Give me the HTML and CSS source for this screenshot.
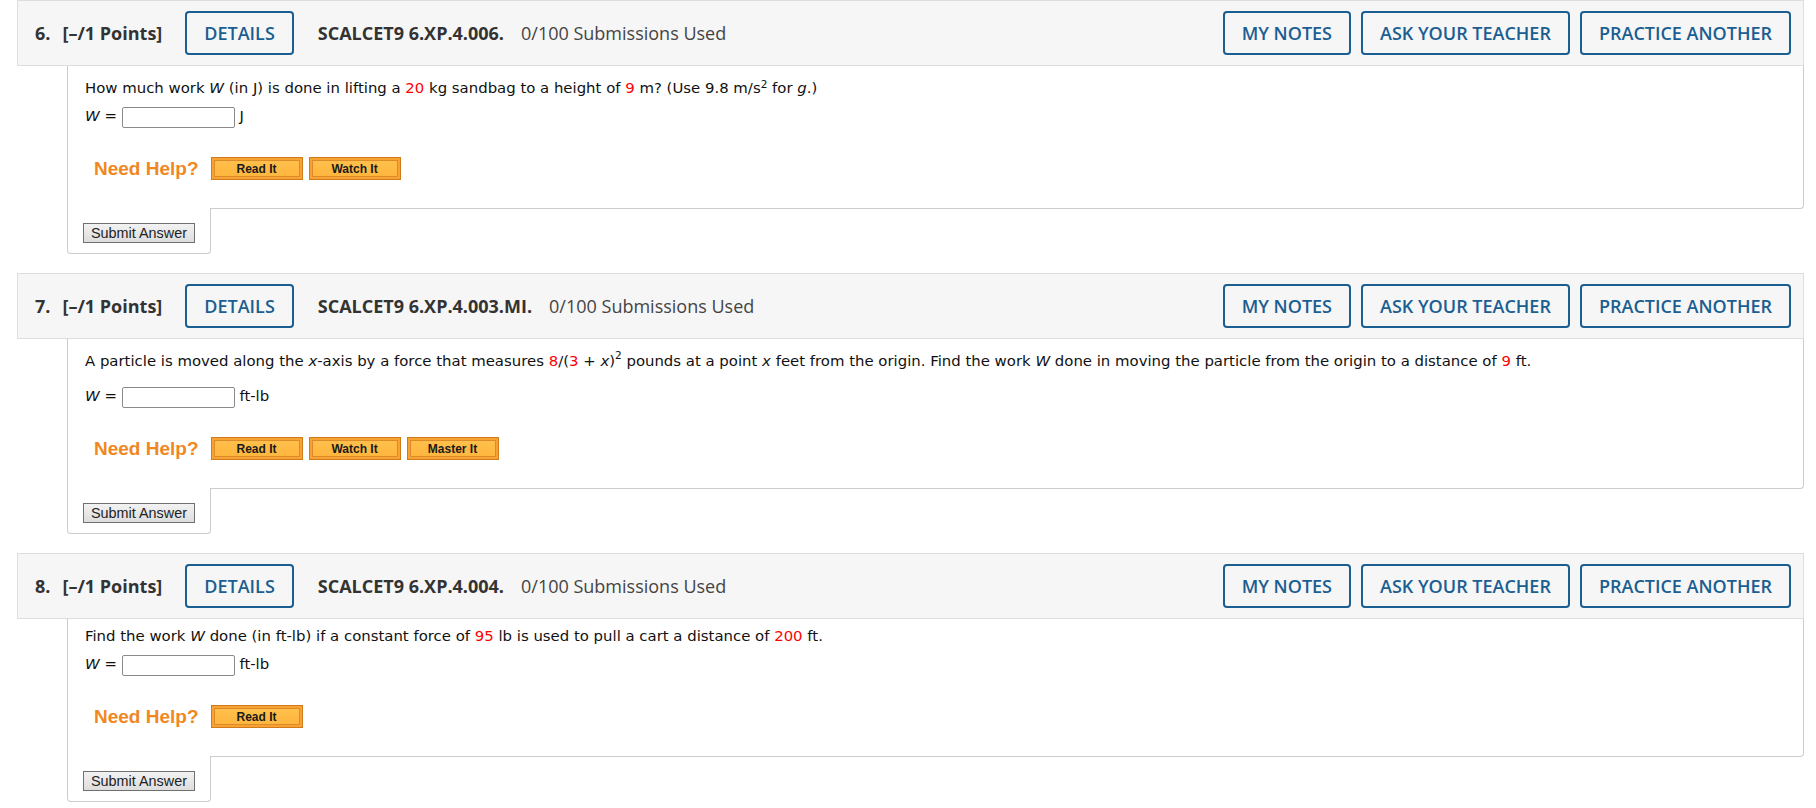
FILE: index.html
```html
<!DOCTYPE html>
<html lang="en">
<head>
<meta charset="utf-8">
<title>Questions</title>
<link rel="stylesheet" href="styles.css">
</head>
<body>
<div class="page">

  <section class="question">
    <header class="q-head">
      <span class="q-num">6.</span>
      <span class="q-points">[–/1 Points]</span>
      <button class="btn-outline q-details">DETAILS</button>
      <span class="q-code">SCALCET9 6.XP.4.006.</span>
      <span class="q-subs">0/100 Submissions Used</span>
      <div class="q-actions">
        <button class="btn-outline btn-notes">MY NOTES</button>
        <button class="btn-outline">ASK YOUR TEACHER</button>
        <button class="btn-outline">PRACTICE ANOTHER</button>
      </div>
    </header>
    <div class="q-body">
      <p class="stem stem--sup">How much work <i>W</i> (in J) is done in lifting a <span class="num">20</span> kg sandbag to a height of <span class="num">9</span> m? (Use 9.8 m/s<sup class="sup">2</sup> for <i>g</i>.)</p>
      <div class="answer"><i>W</i> = <input class="answer-input" type="text"> J</div>
      <div class="help">
        <span class="help-label">Need Help?</span>
        <button class="help-btn">Read It</button>
        <button class="help-btn">Watch It</button>
      </div>
    </div>
    <div class="submit-tab"><button class="submit">Submit Answer</button></div>
  </section>

  <section class="question">
    <header class="q-head">
      <span class="q-num">7.</span>
      <span class="q-points">[–/1 Points]</span>
      <button class="btn-outline q-details">DETAILS</button>
      <span class="q-code">SCALCET9 6.XP.4.003.MI.</span>
      <span class="q-subs">0/100 Submissions Used</span>
      <div class="q-actions">
        <button class="btn-outline btn-notes">MY NOTES</button>
        <button class="btn-outline">ASK YOUR TEACHER</button>
        <button class="btn-outline">PRACTICE ANOTHER</button>
      </div>
    </header>
    <div class="q-body">
      <p class="stem stem--tall">A particle is moved along the <i>x</i>-axis by a force that measures <span class="num">8</span>/(<span class="num">3</span> + <i>x</i>)<sup class="sup sup--high">2</sup> pounds at a point <i>x</i> feet from the origin. Find the work <i>W</i> done in moving the particle from the origin to a distance of <span class="num">9</span> ft.</p>
      <div class="answer"><i>W</i> = <input class="answer-input" type="text"> ft-lb</div>
      <div class="help">
        <span class="help-label">Need Help?</span>
        <button class="help-btn">Read It</button>
        <button class="help-btn">Watch It</button>
        <button class="help-btn">Master It</button>
      </div>
    </div>
    <div class="submit-tab"><button class="submit">Submit Answer</button></div>
  </section>

  <section class="question">
    <header class="q-head">
      <span class="q-num">8.</span>
      <span class="q-points">[–/1 Points]</span>
      <button class="btn-outline q-details">DETAILS</button>
      <span class="q-code">SCALCET9 6.XP.4.004.</span>
      <span class="q-subs">0/100 Submissions Used</span>
      <div class="q-actions">
        <button class="btn-outline btn-notes">MY NOTES</button>
        <button class="btn-outline">ASK YOUR TEACHER</button>
        <button class="btn-outline">PRACTICE ANOTHER</button>
      </div>
    </header>
    <div class="q-body">
      <p class="stem">Find the work <i>W</i> done (in ft-lb) if a constant force of <span class="num">95</span> lb is used to pull a cart a distance of <span class="num">200</span> ft.</p>
      <div class="answer"><i>W</i> = <input class="answer-input" type="text"> ft-lb</div>
      <div class="help">
        <span class="help-label">Need Help?</span>
        <button class="help-btn">Read It</button>
      </div>
    </div>
    <div class="submit-tab"><button class="submit">Submit Answer</button></div>
  </section>

</div>
</body>
</html>
```
FILE: styles.css
```css
html, body {
  margin: 0;
  padding: 0;
  background: #ffffff;
}

body {
  font-family: "DejaVu Sans", Verdana, sans-serif;
  color: #111;
}

.page {
  padding: 0 12px 0 17px;
}

.question {
  margin-bottom: 19px;
}

/* ---------- header bar ---------- */
.q-head {
  display: flex;
  align-items: center;
  background: #f6f6f6;
  border: 1px solid #dedede;
  padding: 10px 12px 10px 17px;
  font-family: "Open Sans", sans-serif;
  font-size: 18px;
  color: #333;
}

.q-num {
  font-weight: 700;
  margin-right: 12px;
}

.q-points {
  font-weight: 700;
}

.btn-outline {
  height: 44px;
  box-sizing: border-box;
  padding: 0 17px;
  margin: 0;
  border: 2px solid #1a5e92;
  border-radius: 4px;
  background: transparent;
  color: #1a5e92;
  font-family: "Open Sans", sans-serif;
  font-size: 18px;
  font-weight: 600;
  cursor: pointer;
}

.btn-notes {
  min-width: 128px;
}

.q-details {
  margin-left: 23px;
}

.q-code {
  font-weight: 700;
  margin-left: 24px;
}

.q-subs {
  margin-left: 17px;
  color: #444;
}

.q-actions {
  margin-left: auto;
  display: flex;
  gap: 10px;
}

/* ---------- question body ---------- */
.q-body {
  margin-left: 50px;
  border: 1px solid #cccccc;
  border-top: 0;
  border-radius: 0 0 4px 0;
  padding: 8px 0 28px 17px;
  font-size: 14.9px;
  line-height: 18px;
}

.stem {
  margin: 0;
}

.stem--sup {
  padding-top: 5px;
}

.stem--tall {
  padding-top: 5px;
  padding-bottom: 7px;
}

.num {
  color: #ff0000;
}

.sup {
  font-size: 10.5px;
  line-height: 0;
  vertical-align: 5px;
}

.sup--high {
  vertical-align: 7px;
}

.answer {
  margin-top: 8px;
  height: 23px;
  line-height: 23px;
}

.answer-input {
  box-sizing: border-box;
  width: 113px;
  height: 21px;
  margin: 0;
  padding: 0 3px;
  border: 1px solid #8a8a8a;
  border-radius: 2px;
  background: #fff;
  vertical-align: middle;
  font-size: 13px;
}

/* ---------- need help ---------- */
.help {
  display: flex;
  align-items: center;
  gap: 6px;
  margin-top: 29px;
  padding-left: 9px;
  height: 23px;
}

.help-label {
  font-family: "Liberation Sans", Arial, sans-serif;
  font-weight: 700;
  font-size: 19px;
  line-height: 23px;
  color: #f0871f;
  margin-right: 6px;
}

.help-btn {
  box-sizing: border-box;
  width: 92px;
  height: 23px;
  margin: 0;
  padding: 0;
  border: 1px solid #cf7b1c;
  background: linear-gradient(#ffc24e, #ffb43c);
  box-shadow: inset 0 0 0 2px #f7a232, inset 0 0 0 3px #dd8a2a;
  font-family: "Liberation Sans", Arial, sans-serif;
  font-weight: 700;
  font-size: 12px;
  color: #1a1a1a;
  cursor: pointer;
}

/* ---------- submit tab ---------- */
.submit-tab {
  margin-left: 50px;
  margin-top: -1px;
  width: fit-content;
  background: #fff;
  border: 1px solid #cccccc;
  border-top: 0;
  border-radius: 0 0 4px 4px;
  padding: 15px 15px 10px 15px;
}

.submit {
  display: block;
  box-sizing: border-box;
  height: 20px;
  margin: 0;
  padding: 0 7px;
  border: 1px solid #707070;
  border-radius: 0;
  background: linear-gradient(#f2f2f2, #dddddd);
  font-family: "Liberation Sans", Arial, sans-serif;
  font-size: 14.4px;
  line-height: 18px;
  color: #222;
  cursor: pointer;
}
```
